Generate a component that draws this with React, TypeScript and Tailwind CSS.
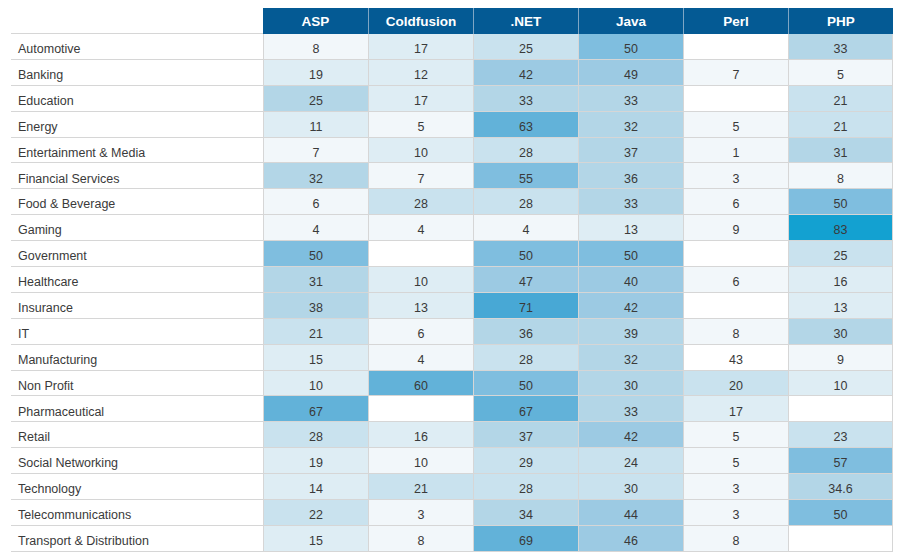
import React from "react";

const LEVELS = [
  "bg-[#ffffff]",
  "bg-[#f2f7fa]",
  "bg-[#deedf4]",
  "bg-[#c9e2ee]",
  "bg-[#b3d6e7]",
  "bg-[#9ccae3]",
  "bg-[#7fbedf]",
  "bg-[#62b2d9]",
  "bg-[#48a8d5]",
  "bg-[#13a1d1]",
];

const COLS = ["ASP", "Coldfusion", ".NET", "Java", "Perl", "PHP"];

type Cell = [string, number];

const ROWS: [string, Cell[]][] = [
  ["Automotive", [["8", 1], ["17", 2], ["25", 3], ["50", 6], ["", 0], ["33", 4]]],
  ["Banking", [["19", 2], ["12", 2], ["42", 5], ["49", 5], ["7", 1], ["5", 1]]],
  ["Education", [["25", 4], ["17", 2], ["33", 4], ["33", 4], ["", 0], ["21", 3]]],
  ["Energy", [["11", 2], ["5", 1], ["63", 7], ["32", 4], ["5", 1], ["21", 3]]],
  ["Entertainment & Media", [["7", 1], ["10", 2], ["28", 3], ["37", 4], ["1", 1], ["31", 4]]],
  ["Financial Services", [["32", 4], ["7", 1], ["55", 6], ["36", 4], ["3", 1], ["8", 1]]],
  ["Food & Beverage", [["6", 1], ["28", 3], ["28", 3], ["33", 4], ["6", 1], ["50", 6]]],
  ["Gaming", [["4", 1], ["4", 1], ["4", 1], ["13", 2], ["9", 1], ["83", 9]]],
  ["Government", [["50", 6], ["", 0], ["50", 6], ["50", 6], ["", 0], ["25", 3]]],
  ["Healthcare", [["31", 4], ["10", 2], ["47", 5], ["40", 5], ["6", 1], ["16", 2]]],
  ["Insurance", [["38", 4], ["13", 2], ["71", 8], ["42", 5], ["", 0], ["13", 2]]],
  ["IT", [["21", 3], ["6", 1], ["36", 4], ["39", 4], ["8", 1], ["30", 4]]],
  ["Manufacturing", [["15", 2], ["4", 1], ["28", 3], ["32", 4], ["43", 0], ["9", 1]]],
  ["Non Profit", [["10", 2], ["60", 7], ["50", 6], ["30", 4], ["20", 3], ["10", 2]]],
  ["Pharmaceutical", [["67", 7], ["", 0], ["67", 7], ["33", 4], ["17", 2], ["", 0]]],
  ["Retail", [["28", 3], ["16", 2], ["37", 4], ["42", 5], ["5", 1], ["23", 3]]],
  ["Social Networking", [["19", 2], ["10", 1], ["29", 3], ["24", 3], ["5", 1], ["57", 6]]],
  ["Technology", [["14", 2], ["21", 3], ["28", 3], ["30", 3], ["3", 1], ["34.6", 4]]],
  ["Telecommunications", [["22", 3], ["3", 1], ["34", 4], ["44", 5], ["3", 1], ["50", 6]]],
  ["Transport & Distribution", [["15", 2], ["8", 1], ["69", 7], ["46", 5], ["8", 1], ["", 0]]],
];

export default function App() {
  return (
    <div
      className="w-[903px] h-[558px] bg-white overflow-hidden pt-[8px] pl-[11px]"
      style={{ fontFamily: '"Liberation Sans", Arial, sans-serif' }}
    >
      <div className="w-[882px]">
        <div className="grid grid-cols-[252px_repeat(6,105px)] h-[26px]">
          <div className="border-b border-[#d6d6d6]" />
          {COLS.map((c, i) => (
            <div
              key={c}
              className={`bg-[#045a94] text-white font-bold text-[13.5px] flex items-center justify-center pt-[3px] ${
                i > 0 ? "border-l border-[#7fa6c4]" : ""
              }`}
            >
              {c}
            </div>
          ))}
        </div>
        {ROWS.map(([label, cells]) => (
          <div
            key={label}
            className="grid grid-cols-[252px_repeat(6,105px)] h-[25.9px]"
          >
            <div className="border-b border-[#d6d6d6] flex items-center pl-[7px] pt-[6px] text-[12.5px] text-[#3a3a3a]">
              {label}
            </div>
            {cells.map(([v, lvl], i) => (
              <div
                key={i}
                className={`${LEVELS[lvl]} border-b border-l border-[#d6d6d6] ${
                  i === 5 ? "border-r" : ""
                } flex items-center justify-center pt-[6px] text-[12.5px] text-[#3a3a3a]`}
              >
                {v}
              </div>
            ))}
          </div>
        ))}
      </div>
    </div>
  );
}
